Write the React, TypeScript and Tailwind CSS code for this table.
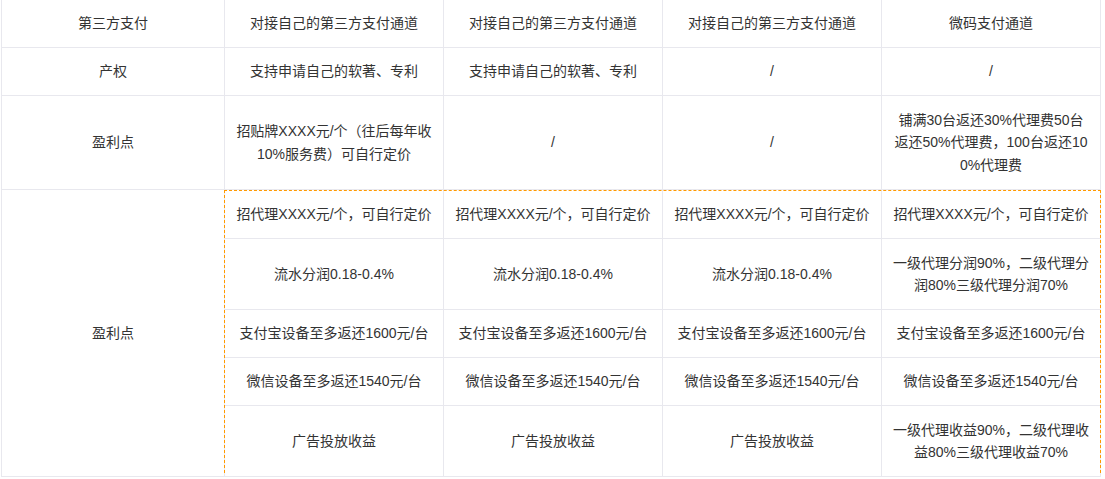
const cell =
  'border-r border-b border-[#e8e8ee] text-center align-middle px-2 py-0 whitespace-nowrap';

const rows: { h: string; cells: React.ReactNode[] }[] = [
  {
    h: 'h-[48px]',
    cells: ['第三方支付', '对接自己的第三方支付通道', '对接自己的第三方支付通道', '对接自己的第三方支付通道', '微码支付通道'],
  },
  {
    h: 'h-[48px]',
    cells: ['产权', '支持申请自己的软著、专利', '支持申请自己的软著、专利', '/', '/'],
  },
  {
    h: 'h-[94px]',
    cells: [
      '盈利点',
      <>招贴牌XXXX元/个（往后每年收<br />10%服务费）可自行定价</>,
      '/',
      '/',
      <>铺满30台返还30%代理费50台<br />返还50%代理费，100台返还10<br />0%代理费</>,
    ],
  },
];

const profit: { h: string; cells: React.ReactNode[] }[] = [
  {
    h: 'h-[49px]',
    cells: ['招代理XXXX元/个，可自行定价', '招代理XXXX元/个，可自行定价', '招代理XXXX元/个，可自行定价', '招代理XXXX元/个，可自行定价'],
  },
  {
    h: 'h-[71px]',
    cells: ['流水分润0.18-0.4%', '流水分润0.18-0.4%', '流水分润0.18-0.4%', <>一级代理分润90%，二级代理分<br />润80%三级代理分润70%</>],
  },
  {
    h: 'h-[48px]',
    cells: ['支付宝设备至多返还1600元/台', '支付宝设备至多返还1600元/台', '支付宝设备至多返还1600元/台', '支付宝设备至多返还1600元/台'],
  },
  {
    h: 'h-[48px]',
    cells: ['微信设备至多返还1540元/台', '微信设备至多返还1540元/台', '微信设备至多返还1540元/台', '微信设备至多返还1540元/台'],
  },
  {
    h: 'h-[71px]',
    cells: ['广告投放收益', '广告投放收益', '广告投放收益', <>一级代理收益90%，二级代理收<br />益80%三级代理收益70%</>],
  },
];

export default function App() {
  return (
    <div className="relative bg-white min-h-[479px] text-[14px] leading-[22.5px] text-[#333] font-['Liberation_Sans','Noto_Sans_CJK_SC',sans-serif]">
      <table className="ml-[1px] w-[1100px] table-fixed border-separate border-spacing-0">
        <colgroup>
          <col className="w-[224px]" />
          <col className="w-[219px]" />
          <col className="w-[219px]" />
          <col className="w-[219px]" />
          <col className="w-[219px]" />
        </colgroup>
        <tbody>
          {rows.map((row, i) => (
            <tr key={i} className={row.h}>
              {row.cells.map((c, j) => (
                <td key={j} className={j === 0 ? `${cell} border-l` : cell}>
                  {c}
                </td>
              ))}
            </tr>
          ))}
          {profit.map((row, i) => (
            <tr key={`p${i}`} className={row.h}>
              {i === 0 && (
                <td rowSpan={5} className={`${cell} border-l`}>
                  盈利点
                </td>
              )}
              {row.cells.map((c, j) => (
                <td key={j} className={cell}>
                  {c}
                </td>
              ))}
            </tr>
          ))}
        </tbody>
      </table>

      {/* selection outline over the profit block */}
      <div className="pointer-events-none absolute left-[224px] top-[190px] w-[877px] h-[283px] border-t border-l border-r border-dashed border-[#ff9900]" />
    </div>
  );
}
